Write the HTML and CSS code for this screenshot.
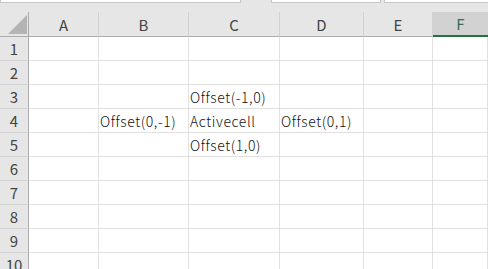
FILE: index.html
```html
<!DOCTYPE html>
<html lang="ja">
<head>
    <meta charset="UTF-8">
    <title>Offset</title>
    <link rel="stylesheet" href="styles.css">
</head>
<body>
    <div class="toolbar">
        <div class="box box-name"></div>
        <div class="box box-mid"></div>
        <div class="box box-right"></div>
    </div>

    <div class="sheet">
        <div class="corner"><span class="tri"></span></div>
        <div class="col-head">A</div>
        <div class="col-head">B</div>
        <div class="col-head">C</div>
        <div class="col-head">D</div>
        <div class="col-head">E</div>
        <div class="col-head selected">F</div>

        <div class="row-head">1</div>
        <div class="cell"></div><div class="cell"></div><div class="cell"></div><div class="cell"></div><div class="cell"></div><div class="cell"></div>

        <div class="row-head">2</div>
        <div class="cell"></div><div class="cell"></div><div class="cell"></div><div class="cell"></div><div class="cell"></div><div class="cell"></div>

        <div class="row-head">3</div>
        <div class="cell"></div><div class="cell"></div><div class="cell">Offset(-1,0)</div><div class="cell"></div><div class="cell"></div><div class="cell"></div>

        <div class="row-head">4</div>
        <div class="cell"></div><div class="cell">Offset(0,-1)</div><div class="cell">Activecell</div><div class="cell">Offset(0,1)</div><div class="cell"></div><div class="cell"></div>

        <div class="row-head">5</div>
        <div class="cell"></div><div class="cell"></div><div class="cell">Offset(1,0)</div><div class="cell"></div><div class="cell"></div><div class="cell"></div>

        <div class="row-head">6</div>
        <div class="cell"></div><div class="cell"></div><div class="cell"></div><div class="cell"></div><div class="cell"></div><div class="cell"></div>

        <div class="row-head">7</div>
        <div class="cell"></div><div class="cell"></div><div class="cell"></div><div class="cell"></div><div class="cell"></div><div class="cell"></div>

        <div class="row-head">8</div>
        <div class="cell"></div><div class="cell"></div><div class="cell"></div><div class="cell"></div><div class="cell"></div><div class="cell"></div>

        <div class="row-head">9</div>
        <div class="cell"></div><div class="cell"></div><div class="cell"></div><div class="cell"></div><div class="cell"></div><div class="cell"></div>

        <div class="row-head">10</div>
        <div class="cell"></div><div class="cell"></div><div class="cell"></div><div class="cell"></div><div class="cell"></div><div class="cell"></div>
    </div>
</body>
</html>
```

FILE: styles.css
```css
* {
    margin: 0;
    padding: 0;
    box-sizing: border-box;
}

body {
    width: 488px;
    height: 269px;
    overflow: hidden;
    background: #e6e6e6;
    font-family: 'Noto Sans CJK JP', 'Noto Sans', sans-serif;
    font-size: 14px;
}

.toolbar {
    height: 12px;
    display: flex;
    background: #e6e6e6;
}

.box {
    height: 3px;
    background: white;
    border: 1px solid #c6c6c6;
    border-top: none;
}

.box-name {
    width: 241px;
}

.box-mid {
    width: 110px;
    margin-left: 30px;
}

.box-right {
    flex: 1;
    margin-left: 3px;
    border-right: none;
}

.sheet {
    display: grid;
    grid-template-columns: 29px 70px 90px 91px 84px 69px 1fr;
    grid-template-rows: 25px;
    grid-auto-rows: 24px;
    background: white;
}

.corner {
    background: #e6e6e6;
    border-right: 1px solid #ababab;
    border-bottom: 1px solid #ababab;
    position: relative;
}

.tri {
    position: absolute;
    left: 8px;
    top: 3px;
    width: 0;
    height: 0;
    border-left: 19px solid transparent;
    border-bottom: 19px solid #b4b4b4;
}

.col-head {
    background: #e6e6e6;
    color: #444;
    border-right: 1px solid #d2d2d2;
    border-bottom: 1px solid #ababab;
    display: flex;
    align-items: center;
    justify-content: center;
    font-size: 15px;
}

.col-head.selected {
    background: #d2d2d2;
    color: #3d6b4c;
    border-right: none;
    border-bottom: 2px solid #217346;
}

.row-head {
    background: #e6e6e6;
    color: #444;
    border-right: 1px solid #ababab;
    border-bottom: 1px solid #d2d2d2;
    display: flex;
    align-items: center;
    justify-content: center;
    font-size: 15px;
}

.cell {
    border-right: 1px solid #e1e1e1;
    border-bottom: 1px solid #e1e1e1;
    color: #111;
    padding-left: 1px;
    display: flex;
    align-items: center;
    white-space: nowrap;
    overflow: visible;
    font-size: 14px;
    font-weight: 300;
    letter-spacing: 0.6px;
}
```
